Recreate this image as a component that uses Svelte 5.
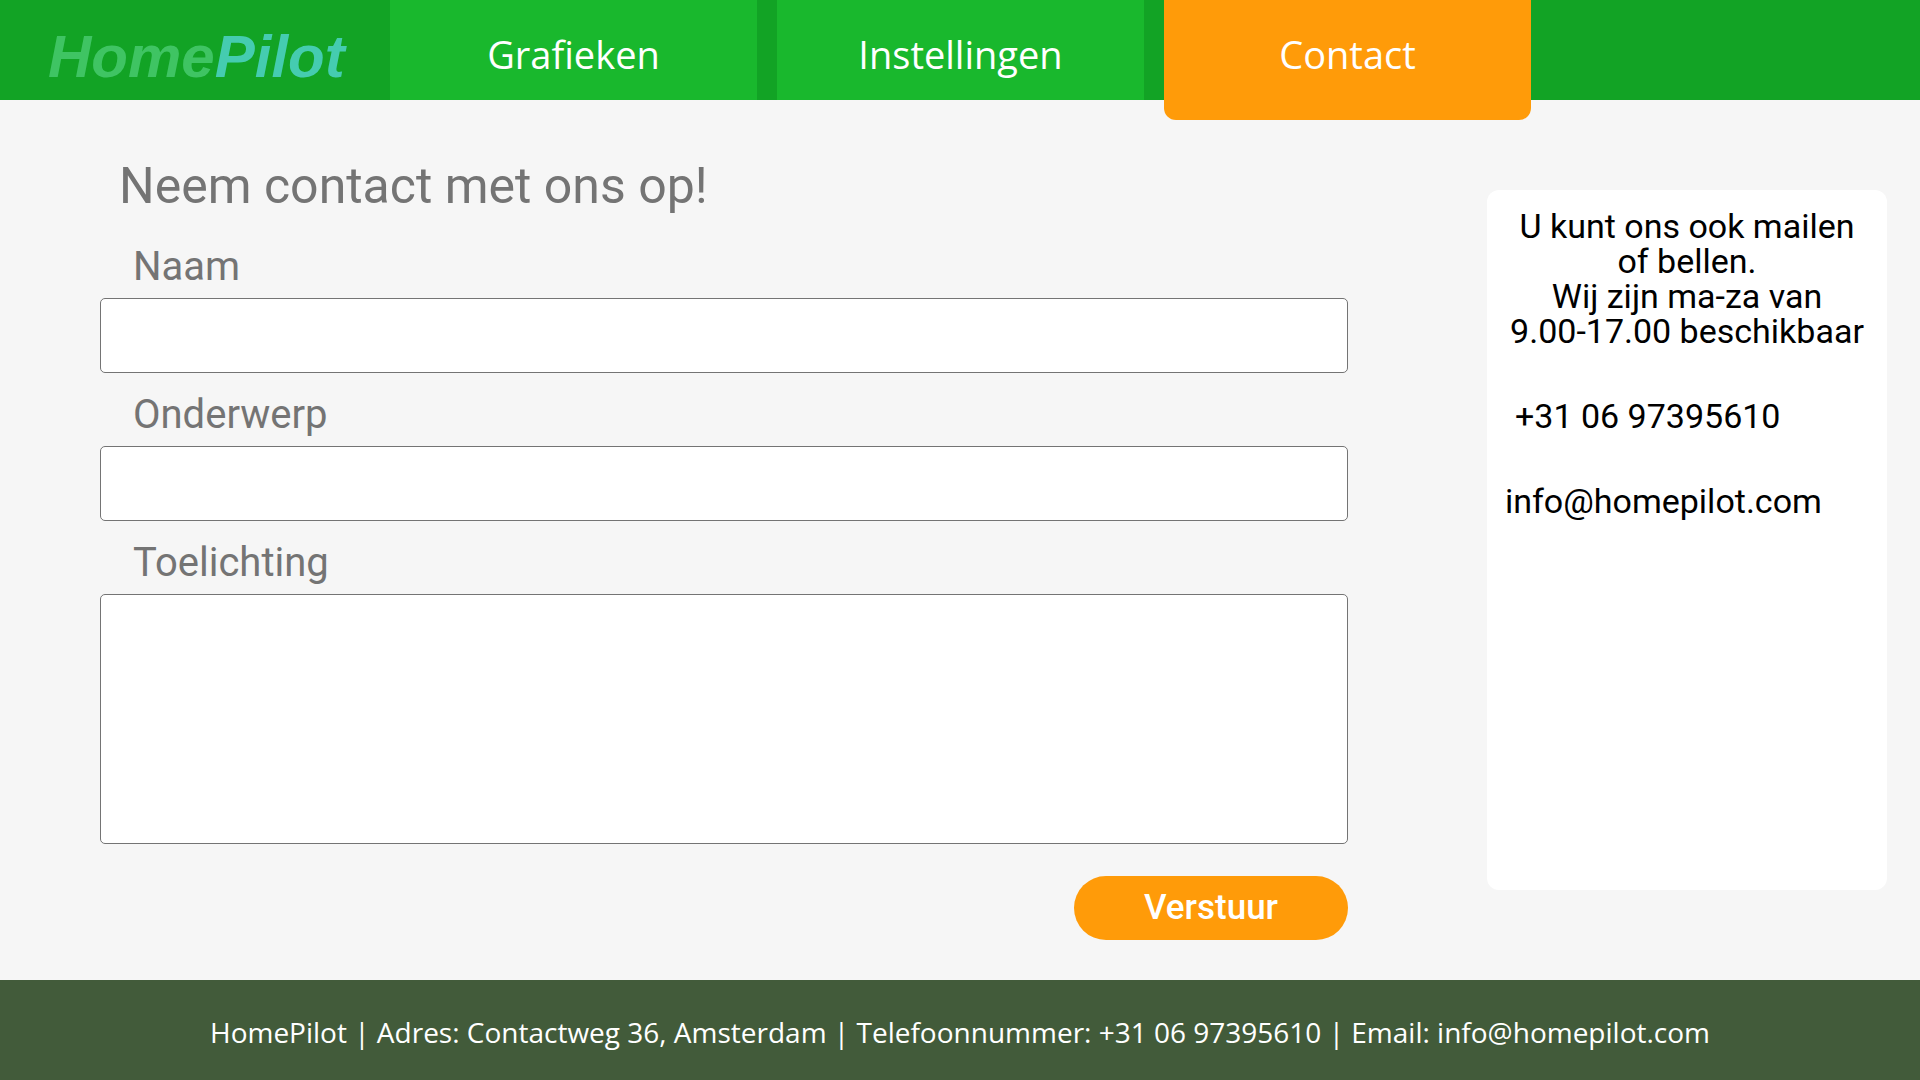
<script>
  const tabs = ['Grafieken', 'Instellingen', 'Contact'];
  const current = 'Contact';

  let name = $state('');
  let subject = $state('');
  let message = $state('');

  function submit(event) {
    event.preventDefault();
  }
</script>

<div class="page">
  <header>
    <a class="logo" href="#home"><span>Home</span><span class="accent">Pilot</span></a>
    <nav>
      {#each tabs as tab}
        <a
          class="tab"
          class:active={tab === current}
          href={'#' + tab.toLowerCase()}
          aria-current={tab === current ? 'page' : undefined}>{tab}</a>
      {/each}
    </nav>
  </header>

  <main>
    <form onsubmit={submit}>
      <h1>Neem contact met ons op!</h1>
      <div class="field">
        <label for="name">Naam</label>
        <input id="name" type="text" bind:value={name} />
      </div>
      <div class="field">
        <label for="subject">Onderwerp</label>
        <input id="subject" type="text" bind:value={subject} />
      </div>
      <div class="field">
        <label for="message">Toelichting</label>
        <textarea id="message" bind:value={message}></textarea>
      </div>
      <button type="submit">Verstuur</button>
    </form>

    <aside>
      <p class="intro">U kunt ons ook mailen<br />of bellen.<br />Wij zijn ma-za van<br />9.00-17.00 beschikbaar</p>
      <a class="phone" href="tel:+310697395610">+31 06 97395610</a>
      <a href="mailto:info@homepilot.com">info@homepilot.com</a>
    </aside>
  </main>

  <footer>
    HomePilot | Adres: Contactweg 36, Amsterdam | Telefoonnummer: +31 06 97395610 | Email: info@homepilot.com
  </footer>
</div>

<style>
  :global(body) {
    margin: 0;
    background: #f6f6f6;
  }

  .page {
    display: flex;
    flex-direction: column;
    min-height: 100vh;
    font-family: Roboto, 'Liberation Sans', sans-serif;
  }

  a {
    color: inherit;
    text-decoration: none;
  }

  header {
    display: flex;
    height: 100px;
    background: #12a325;
  }

  .logo {
    box-sizing: border-box;
    flex: 0 0 390px;
    padding: 22px 0 0 48px;
    font: italic bold 60px/70px 'Liberation Sans', Arial, sans-serif;
    color: #3fc463;
    white-space: nowrap;
  }

  .accent {
    color: #45ccb0;
  }

  nav {
    display: flex;
    flex: 0 1 1141px;
    gap: 20px;
  }

  .tab {
    box-sizing: border-box;
    flex: 1;
    height: 100px;
    padding-top: 26px;
    background: #19b82d;
    color: #fff;
    font: 38px/56px 'Open Sans', 'Noto Sans', sans-serif;
    text-align: center;
  }

  .tab.active {
    height: 120px;
    border-radius: 0 0 12px 12px;
    background: #ff9b09;
  }

  main {
    display: flex;
    flex: 1;
    justify-content: space-between;
    padding: 0 33px 0 100px;
  }

  form {
    display: flex;
    flex-direction: column;
    width: 65vw;
    padding: 56px 0 40px;
    color: #747474;
  }

  h1 {
    margin: 0 0 9px;
    padding-left: 19px;
    font-size: 50px;
    font-weight: 400;
    line-height: 60px;
  }

  .field {
    display: flex;
    flex-direction: column;
    gap: 7px;
    padding-top: 18px;
  }

  label {
    padding-left: 33px;
    font-size: 40px;
    line-height: 48px;
  }

  input,
  textarea {
    box-sizing: border-box;
    width: 100%;
    height: 75px;
    margin: 0;
    padding: 8px 20px;
    border: 1px solid #747474;
    border-radius: 5px;
    background: #fff;
    font: inherit;
    font-size: 32px;
    resize: none;
  }

  textarea {
    height: 250px;
  }

  button {
    align-self: flex-end;
    width: 274px;
    height: 64px;
    margin-top: 32px;
    padding: 0;
    border: 0;
    border-radius: 32px;
    background: #ff9b09;
    color: #fff;
    font: 500 35px/64px Roboto, sans-serif;
  }

  aside {
    box-sizing: border-box;
    display: flex;
    flex-direction: column;
    gap: 50px;
    width: 400px;
    margin: 90px 0;
    padding: 19px 18px;
    border-radius: 12px;
    background: #fff;
    color: #000;
    font-size: 34px;
    line-height: 35px;
    white-space: nowrap;
  }

  .intro {
    margin: 0;
    text-align: center;
  }

  .phone {
    padding-left: 10px;
  }

  footer {
    box-sizing: border-box;
    min-height: 100px;
    padding: 32px 20px 28px;
    background: #425b3a;
    color: #fff;
    font: 28px/40px 'Open Sans', 'Noto Sans', sans-serif;
    text-align: center;
  }
</style>
